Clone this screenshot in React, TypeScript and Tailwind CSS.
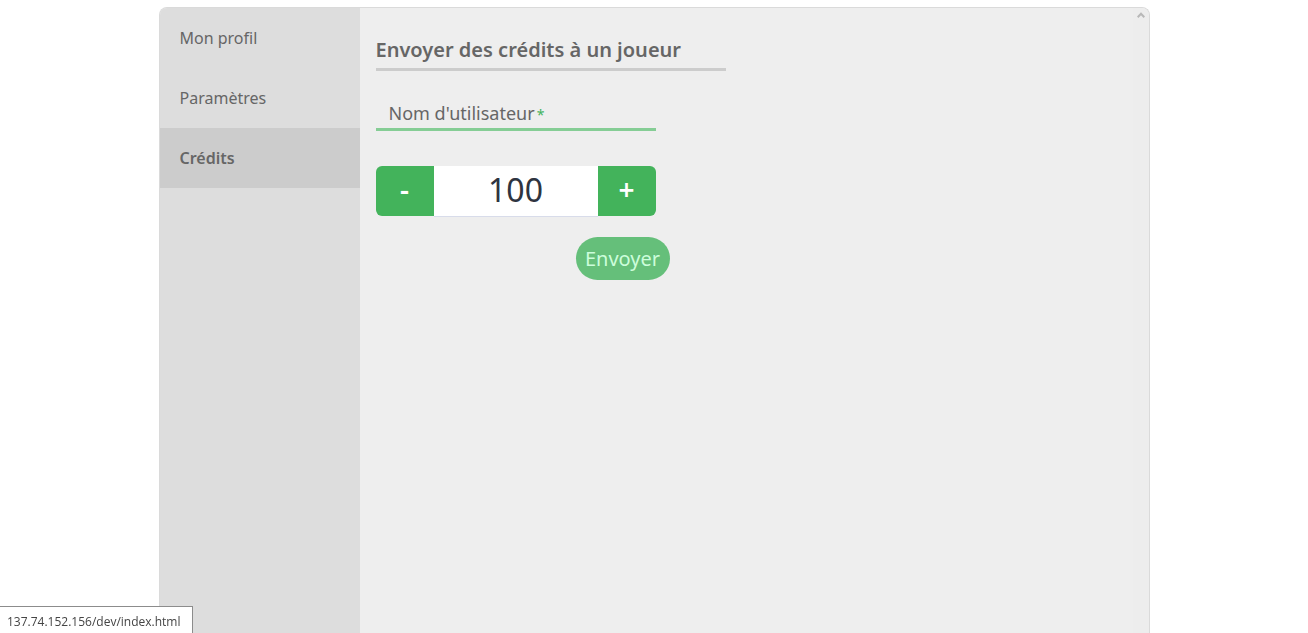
import { useState } from "react";
import clsx from "clsx";

const tabs = ["Mon profil", "Paramètres", "Crédits"];

export default function App() {
  const [active, setActive] = useState("Crédits");
  const [amount, setAmount] = useState("100");
  const [user, setUser] = useState("");
  const step = (n: number) => setAmount(String(Math.max(0, Number(amount) + n)));

  return (
    <div className="flex h-screen flex-col overflow-hidden bg-white px-4 pt-[7px] font-['Noto_Sans',sans-serif] text-[#666]">
      <div className="mx-auto flex w-full max-w-[991px] grow overflow-hidden rounded-t-lg border border-b-0 border-[#dadada] bg-[#eee]">
        <nav className="flex w-[200px] shrink-0 flex-col bg-[#ddd]">
          {tabs.map((tab) => (
            <button
              key={tab}
              type="button"
              onClick={() => setActive(tab)}
              className={clsx(
                "h-[60px] px-5 text-left text-base",
                active === tab ? "bg-[#ccc] font-semibold" : "font-normal",
              )}
            >
              {tab}
            </button>
          ))}
        </nav>

        <main className="grow px-4 pt-7">
          <h1 className="max-w-[350px] border-b-[3px] border-[#ccc] pb-1 text-xl font-semibold whitespace-nowrap">
            Envoyer des crédits à un joueur
          </h1>
          <form onSubmit={(e) => e.preventDefault()}>
            <div className="mt-6 grid w-[280px]">
              <label
                htmlFor="username"
                className={clsx("col-start-1 row-start-1 self-center pl-[13px] text-lg", user && "invisible")}
              >
                Nom d'utilisateur
                <span className="ml-0.5 text-sm text-[#43b35b]">*</span>
              </label>
              <input
                id="username"
                value={user}
                onChange={(e) => setUser(e.target.value)}
                className="col-start-1 row-start-1 h-9 w-full min-w-0 border-b-[3px] border-[#85cd95] bg-transparent px-[13px] text-lg outline-none"
              />
            </div>

            <div className="mt-[35px] flex h-[51px] w-[280px] overflow-hidden rounded-md">
              <button
                type="button"
                aria-label="Diminuer"
                onClick={() => step(-1)}
                className="mb-px w-[58px] shrink-0 rounded-bl-md bg-[#43b35b] pb-1 text-[28px] font-semibold text-white"
              >
                -
              </button>
              <input
                aria-label="Crédits"
                inputMode="numeric"
                value={amount}
                onChange={(e) => setAmount(e.target.value)}
                className="min-w-0 grow border-b border-[#d8dcea] bg-white pb-0.5 text-center text-[32px] text-[#2e3440] outline-none"
              />
              <button
                type="button"
                aria-label="Augmenter"
                onClick={() => step(1)}
                className="mb-px w-[58px] shrink-0 rounded-br-md bg-[#43b35b] pb-1 text-[28px] font-semibold text-white"
              >
                +
              </button>
            </div>

            <div className="mt-5 flex max-w-[294px] justify-end">
              <button
                type="submit"
                className="h-[43px] w-[94px] rounded-full bg-[#65bf7a] text-xl text-[#ccfddb]"
              >
                Envoyer
              </button>
            </div>
          </form>
        </main>

        <div className="w-4 shrink-0 bg-[#ededed] pt-1">
          <svg viewBox="0 0 8 6" className="mx-auto h-1.5 w-2" fill="none" stroke="#b8b8b8" strokeWidth="2">
            <path d="M.7 5.2 4 1.7l3.3 3.5" />
          </svg>
        </div>
      </div>

      <div className="fixed bottom-0 left-0 flex h-[27px] w-[193px] items-center border-t border-r border-[#8c8c8c] bg-white/98 pt-1 pl-[7px] font-['Open_Sans',sans-serif] text-xs whitespace-nowrap text-[#444]">
        137.74.152.156/dev/index.html
      </div>
    </div>
  );
}
